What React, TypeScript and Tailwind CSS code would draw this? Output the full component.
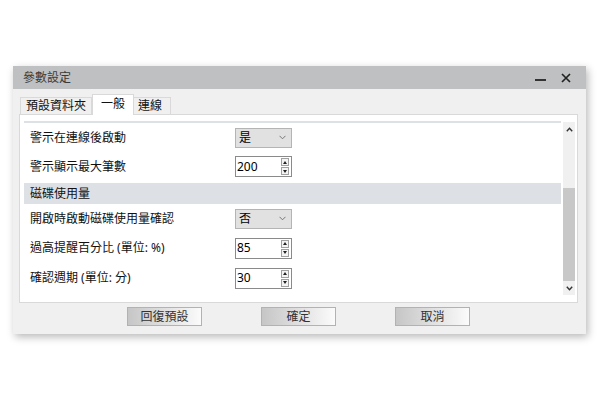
import React from "react";

const font = { fontFamily: '"Noto Sans", "Noto Sans CJK TC", sans-serif' };

function Dropdown({ value }: { value: string }) {
  return (
    <div className="w-[57px] h-[20px] bg-[#e1e1e1] border border-[#b4b4b4] flex items-center justify-between pl-[3px] pr-[5px]">
      <span className="text-[12px] leading-none text-black">{value}</span>
      <svg width="7" height="5" viewBox="0 0 7 5">
        <path d="M0.5 0.8 L3.5 3.8 L6.5 0.8" fill="none" stroke="#777" strokeWidth="1" />
      </svg>
    </div>
  );
}

function SpinBox({ value }: { value: string }) {
  return (
    <div className="w-[57px] h-[21px] bg-white border border-[#8a8a8a] flex items-center justify-between pl-[1px] pr-[2px]">
      <span className="text-[12px] leading-none text-black">{value}</span>
      <div className="flex flex-col gap-[1px]">
        <div className="w-[8px] h-[8px] border border-[#a0a0a0] bg-[#f4f4f4] flex items-center justify-center">
          <svg width="4" height="3" viewBox="0 0 4 3">
            <path d="M0 3 L2 0 L4 3 Z" fill="#222" />
          </svg>
        </div>
        <div className="w-[8px] h-[8px] border border-[#a0a0a0] bg-[#f4f4f4] flex items-center justify-center">
          <svg width="4" height="3" viewBox="0 0 4 3">
            <path d="M0 0 L4 0 L2 3 Z" fill="#222" />
          </svg>
        </div>
      </div>
    </div>
  );
}

function Row({ label, h, children }: { label: string; h: string; children: React.ReactNode }) {
  return (
    <div className={`flex items-center ${h} pl-[6px]`}>
      <span className="w-[205px] text-[12px] leading-none text-[#111]">{label}</span>
      {children}
    </div>
  );
}

function Btn({ label }: { label: string }) {
  return (
    <div className="w-[75px] h-[19px] border border-[#7cc3ec] bg-gradient-to-r from-[#c6c6c6] to-[#fbfbfb] flex items-center justify-center">
      <span className="text-[12px] leading-none text-[#333]">{label}</span>
    </div>
  );
}

export default function App() {
  return (
    <div className="w-[600px] h-[400px] bg-white overflow-hidden" style={font}>
      <div className="ml-[13px] mt-[66px] w-[573px] h-[268px] flex flex-col shadow-[2px_3px_8px_rgba(0,0,0,0.28)]">
        {/* title bar */}
        <div className="h-[23px] bg-[#bfc0c1] flex items-center justify-between pl-[10px] pr-[15px]">
          <span className="text-[12px] leading-none text-[#3a3a3a]">參數設定</span>
          <div className="flex items-center gap-[15px]">
            <svg width="11" height="10" viewBox="0 0 11 10">
              <rect x="0" y="6" width="11" height="2" fill="#333" />
            </svg>
            <svg width="10" height="10" viewBox="0 0 10 10">
              <path d="M1 1 L9 9 M9 1 L1 9" stroke="#222" strokeWidth="1.7" />
            </svg>
          </div>
        </div>
        {/* body */}
        <div className="flex-1 bg-[#f0f0f0] flex flex-col pl-[6px] pr-[8px]">
          {/* tabs */}
          <div className="h-[25px] flex items-end pl-[1px]">
            <div className="h-[17px] px-[5px] border border-b-0 border-[#d9d9d9] bg-[#f0f0f0] flex items-center">
              <span className="text-[12px] leading-none text-[#111]">預設資料夾</span>
            </div>
            <div className="h-[21px] w-[42px] border border-b-0 border-[#d9d9d9] bg-white flex items-start justify-center pt-[3px] -mb-[1px] relative">
              <span className="text-[12px] leading-none text-[#111]">一般</span>
            </div>
            <div className="h-[17px] w-[37px] border border-b-0 border-l-0 border-[#d9d9d9] bg-[#f0f0f0] flex items-center pl-[4px]">
              <span className="text-[12px] leading-none text-[#111]">連線</span>
            </div>
          </div>
          {/* panel */}
          <div className="h-[189px] border border-[#d9d9d9] bg-white flex pl-[4px] pr-[2px]">
            <div className="flex-1 flex flex-col pt-[6px]">
              <div className="h-[2px] bg-[#dde1e6]" />
              <Row label="警示在連線後啟動" h="h-[29px]">
                <Dropdown value="是" />
              </Row>
              <Row label="警示顯示最大筆數" h="h-[29px]">
                <SpinBox value="200" />
              </Row>
              <div className="mt-[2px] h-[21px] bg-[#dde1e6] flex items-center pl-[6px]">
                <span className="text-[12px] leading-none text-[#111]">磁碟使用量</span>
              </div>
              <Row label="開啟時啟動磁碟使用量確認" h="h-[29px]">
                <Dropdown value="否" />
              </Row>
              <Row label="過高提醒百分比 (單位: %)" h="h-[30px]">
                <SpinBox value="85" />
              </Row>
              <Row label="確認週期 (單位: 分)" h="h-[30px]">
                <SpinBox value="30" />
              </Row>
            </div>
            {/* scrollbar */}
            <div className="w-[12px] ml-[2px] mt-[7px] mb-[7px] bg-[#f0f0f0] flex flex-col items-center">
              <div className="h-[14px] flex items-center justify-center">
                <svg width="7" height="5" viewBox="0 0 7 5">
                  <path d="M0.8 4.2 L3.5 1.2 L6.2 4.2" fill="none" stroke="#333" strokeWidth="1.4" />
                </svg>
              </div>
              <div className="w-full flex-1 flex flex-col">
                <div className="h-[52px]" />
                <div className="flex-1 bg-[#c8c8c8]" />
              </div>
              <div className="h-[14px] flex items-center justify-center">
                <svg width="7" height="5" viewBox="0 0 7 5">
                  <path d="M0.8 0.8 L3.5 3.8 L6.2 0.8" fill="none" stroke="#333" strokeWidth="1.4" />
                </svg>
              </div>
            </div>
          </div>
          {/* buttons */}
          <div className="mt-[4px] flex justify-center gap-[59px]">
            <Btn label="回復預設" />
            <Btn label="確定" />
            <Btn label="取消" />
          </div>
        </div>
      </div>
    </div>
  );
}
